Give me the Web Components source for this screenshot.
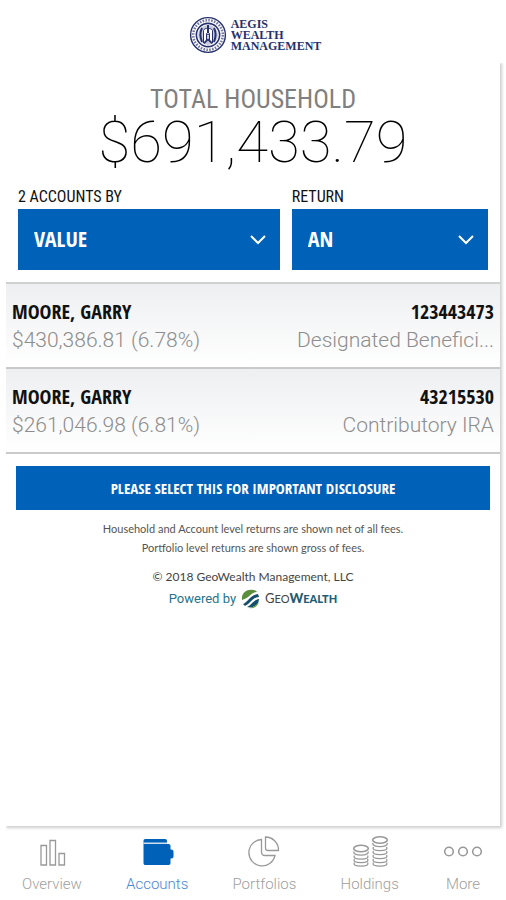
<!DOCTYPE html>
<html lang="en">
<head>
<meta charset="utf-8">
<meta name="viewport" content="width=device-width, initial-scale=1">
<title>Aegis Wealth Management</title>
<style>
  html, body { margin: 0; background: #fff; }
  body { font-family: Roboto, "Liberation Sans", sans-serif; color: #111; }
</style>
</head>
<body>
<wealth-app></wealth-app>
<script>
const define = (name, html, setup) => {
  const template = document.createElement('template');
  template.innerHTML = html;
  customElements.define(name, class extends HTMLElement {
    connectedCallback() {
      if (this.shadowRoot) return;
      const root = this.attachShadow({ mode: 'open' });
      root.append(template.content.cloneNode(true));
      if (setup) setup(root, this);
    }
  });
};

define('brand-header', `
  <style>
    :host { display: flex; justify-content: center; align-items: center; gap: 4px; padding: 16px 0 9px 4px; color: #26306e; }
    svg { width: 38px; height: 38px; }
    .name { font: 700 12px/11px "Liberation Serif", serif; }
  </style>
  <svg viewBox="0 0 38 38" aria-hidden="true" fill="none" stroke="currentColor">
    <circle cx="19" cy="19" r="17.4" stroke-width="1.4"/>
    <circle cx="19" cy="19" r="14.8" stroke-width="2.6" stroke-dasharray="1.6 1.3" opacity=".65"/>
    <circle cx="19" cy="19" r="11.6" stroke-width="1.6"/>
    <circle cx="19" cy="19" r="10" fill="currentColor" stroke="none" opacity=".25"/>
    <path d="M13 12c-2 4-2 9 0 14M25 12c2 4 2 9 0 14" stroke-width="2"/>
    <path d="M14.5 27V14.500c1-3 7.500-3 9 0V27l-3-3v-6.500l-1.500 1-1.500-1V24z" fill="#fff" stroke-width="1"/>
    <path d="M19 9v8" stroke-width="2"/>
    <path d="M15 27.500l4-4 4 4" stroke-width="1.500"/>
  </svg>
  <div class="name">AEGIS<br>WEALTH<br>MANAGEMENT</div>
`);

define('household-total', `
  <style>
    :host { display: block; text-align: center; }
    .label { font: 400 26px/28px "Roboto Condensed", Roboto, sans-serif; color: #808080; }
    .amount { font: 100 58px/58px Roboto, sans-serif; color: #000; }
  </style>
  <div class="label"><slot name="label"></slot></div>
  <div class="amount"><slot></slot></div>
`);

define('select-field', `
  <style>
    :host { display: block; min-width: 0; }
    label { display: block; font: 400 16px/24px "Roboto Condensed", Roboto, sans-serif; color: #111; }
    .box { display: grid; align-items: center; background: #0061b9; }
    select, svg { grid-area: 1 / 1; }
    select { appearance: none; width: 100%; height: 61px; margin: 0; padding: 0 40px 4px 16px; border: 0; border-radius: 0;
      background: none; color: #fff; font: 700 22px "Open Sans Condensed", "Roboto Condensed", sans-serif; }
    svg { justify-self: end; width: 18px; height: 12px; margin-right: 13px; pointer-events: none; }
  </style>
  <label for="s"></label>
  <div class="box">
    <select id="s"><option></option></select>
    <svg viewBox="0 0 18 12" aria-hidden="true" fill="none" stroke="#fff" stroke-width="2"><path d="M2 2l7 7 7-7"/></svg>
  </div>
`, (root, host) => {
  root.querySelector('label').textContent = host.getAttribute('label');
  root.querySelector('option').textContent = host.getAttribute('value');
});

define('account-row', `
  <style>
    :host { display: grid; grid-template-columns: auto auto; justify-content: space-between; padding: 13px 6px 13px;
      border-bottom: 2px solid #c9cbcb; background: linear-gradient(#eeeff1, #fff); }
    .strong { font: 700 20px/30px "Open Sans Condensed", "Roboto Condensed", sans-serif; color: #111; }
    .soft { font: 300 21px/27px Roboto, sans-serif; color: #8d8d8d; white-space: nowrap; }
    .end { text-align: right; }
  </style>
  <div class="strong"><slot name="owner"></slot></div>
  <div class="strong end"><slot name="number"></slot></div>
  <div class="soft"><slot name="value"></slot></div>
  <div class="soft end"><slot name="type"></slot></div>
`);

define('disclosure-notes', `
  <style>
    :host { display: block; padding: 12px 10px 0; text-align: center; }
    button { display: block; width: 100%; height: 44px; border: 0; padding: 0; background: #0061b9; color: #fff;
      font: 700 15px "Open Sans Condensed", "Roboto Condensed", sans-serif; }
    p { margin: 0; }
    .fine { font: 400 11px/19px Lato, sans-serif; color: #555; }
    .fine:first-of-type { margin-top: 9px; }
    .copy { margin-top: 10px; font: 400 12px/20px Lato, sans-serif; color: #444; }
    .powered { display: flex; justify-content: center; align-items: center; gap: 5px; font-size: 13px; line-height: 22px; color: #27738c; }
    svg { width: 19px; height: 20px; }
    .geo { font: 400 11px/22px Lato, sans-serif; color: #444; }
    .geo b { color: #1d5d75; font-weight: 900; }
    big { font-size: 13px; }
  </style>
  <button type="button">PLEASE SELECT THIS FOR IMPORTANT DISCLOSURE</button>
  <p class="fine">Household and Account level returns are shown net of all fees.</p>
  <p class="fine">Portfolio level returns are shown gross of fees.</p>
  <p class="copy">© 2018 GeoWealth Management, LLC</p>
  <div class="powered">
    <span>Powered by</span>
    <svg viewBox="0 0 19 20" aria-hidden="true">
      <path d="M1 11C0 4 6 0 12 1c2 0 3 1 4 2C10 3 9 9 1 11z" fill="#5b8f3c"/>
      <path d="M2 15C7 13 9 6 17 5l1 3C12 8 9 15 4 17z" fill="#14506e"/>
      <path d="M1 13c6-1 8-8 15-9" fill="none" stroke="#fff"/>
      <path d="M6 18c5-2 6-7 12-8 0 5-5 10-12 8z" fill="#14506e"/>
      <path d="M9 19c4-1 6-3 9-6-1 4-5 7-9 6z" fill="#6ba14a"/>
    </svg>
    <span class="geo"><big>G</big>EO<b><big>W</big>EALTH</b></span>
  </div>
`);

define('tab-link', `
  <style>
    :host { display: block; }
    a { display: grid; justify-items: center; gap: 5px; text-decoration: none; color: #a0a0a0; font: 300 15px/20px Roboto, sans-serif; }
    :host([current]) a { color: #4a88d2; }
    ::slotted(svg) { height: 34px; width: 40px; }
  </style>
  <a href="#"><slot name="icon"></slot><slot></slot></a>
`);

define('tab-bar', `
  <style>
    :host { display: flex; justify-content: space-between; padding: 9px 23px 6px 22px; }
    svg { fill: none; stroke: #999; stroke-width: 1.3; }
  </style>
  <tab-link>
    <svg slot="icon" viewBox="0 0 40 34" aria-hidden="true"><path d="M9 10.500h5.500V30H9zM18 5.500h5.500V30H18zM27 18.500h5.500V30H27z"/></svg>
    Overview
  </tab-link>
  <tab-link current>
    <svg slot="icon" viewBox="0 0 40 34" aria-hidden="true" style="fill:#0061b9;stroke:none"><path d="M8.500 4c-1.500 0-2 .8-2 2V28c0 1.500.8 2 2 2h23c1.500 0 2-.8 2-2v-4.500h1c1 0 2-1 2-2V16.500c0-1-1-2-2-2h-1V11c0-1.200-.6-2-2-2H30V6c0-1.200-.6-2-2-2z"/><path d="M6.500 8.200h24" stroke="#fff" stroke-width="1.200"/></svg>
    Accounts
  </tab-link>
  <tab-link>
    <svg slot="icon" viewBox="0 0 40 34" aria-hidden="true"><path d="M17.500 4.500A13.200 13.200 0 1 0 31 20.500H21Q17.500 20.500 17.500 17z"/><path d="M21.500 2A13 13 0 0 1 34.500 15.500H24q-2.500 0-2.500-2.500z"/></svg>
    Portfolios
  </tab-link>
  <tab-link>
    <svg slot="icon" viewBox="0 0 40 34" aria-hidden="true">
      <ellipse cx="11" cy="13.500" rx="7.300" ry="3.200" stroke-width="1.600"/>
      <path d="M3.700 16.500q-.3 3.600 7.300 3.600t7.300-3.600M4.500 20.500q-2 3.600 6.500 3.600t6.500-3.600M4.500 24q-2 3.600 6.500 3.600t6.500-3.600M4.500 27.500q-2 3.600 6.500 3.600t6.500-3.600"/>
      <ellipse cx="30" cy="5" rx="7.300" ry="3.200" stroke-width="1.600"/>
      <path d="M22.700 8q-.3 3.600 7.300 3.600t7.300-3.600M23.500 12q-2 3.600 6.500 3.600t6.500-3.600M23.500 16q-2 3.600 6.500 3.600t6.500-3.600M23.500 20q-2 3.600 6.500 3.600t6.500-3.600M23.500 24q-2 3.600 6.500 3.600t6.500-3.600M23.500 27.500q-2 3.600 6.500 3.600t6.500-3.600"/>
    </svg>
    Holdings
  </tab-link>
  <tab-link>
    <svg slot="icon" viewBox="0 0 40 34" aria-hidden="true" style="stroke-width:1.600"><circle cx="6" cy="16.500" r="4.300"/><circle cx="20" cy="16.500" r="4.300"/><circle cx="34" cy="16.500" r="4.300"/></svg>
    More
  </tab-link>
`);

define('wealth-app', `
  <style>
    :host { display: flex; flex-direction: column; min-height: 100vh; }
    main { flex: 1; margin: 0 6px; background: #fff; box-shadow: 1px 1px 3px 1px rgba(0,0,0,.2); clip-path: inset(0 -6px -6px 0); padding-top: 22px; }
    .filters { display: grid; grid-template-columns: 4fr 3fr; gap: 12px; padding: 14px 12px 12px; }
    .accounts { border-top: 2px solid #d0d2d2; }
  </style>
  <brand-header></brand-header>
  <main>
    <household-total><span slot="label">TOTAL HOUSEHOLD</span>$691,433.79</household-total>
    <div class="filters">
      <select-field label="2 ACCOUNTS BY" value="VALUE"></select-field>
      <select-field label="RETURN" value="AN"></select-field>
    </div>
    <div class="accounts">
      <account-row><span slot="owner">MOORE, GARRY</span><span slot="number">123443473</span><span slot="value">$430,386.81 (6.78%)</span><span slot="type">Designated Benefici...</span></account-row>
      <account-row><span slot="owner">MOORE, GARRY</span><span slot="number">43215530</span><span slot="value">$261,046.98 (6.81%)</span><span slot="type">Contributory IRA</span></account-row>
    </div>
    <disclosure-notes></disclosure-notes>
  </main>
  <tab-bar></tab-bar>
`);
</script>
</body>
</html>
